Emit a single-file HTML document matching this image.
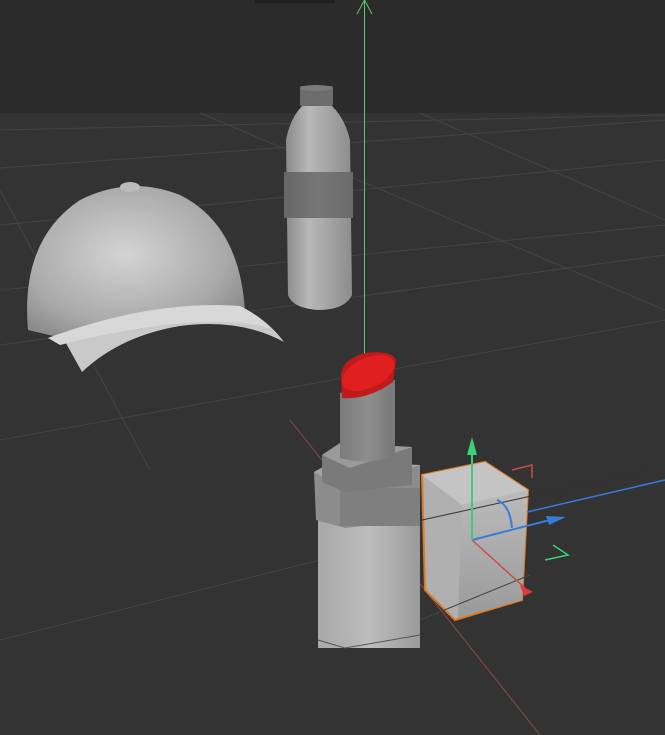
<!DOCTYPE html>
<html><head><style>html,body{margin:0;padding:0;background:#333;}svg{display:block}</style></head>
<body>
<svg width="665" height="735" viewBox="0 0 665 735" xmlns="http://www.w3.org/2000/svg">
<defs>
<radialGradient id="dome" cx="0.45" cy="0.45" r="0.65"><stop offset="0" stop-color="#d4d4d4"/><stop offset="0.7" stop-color="#aaa"/><stop offset="1" stop-color="#8a8a8a"/></radialGradient>
<linearGradient id="bot" x1="0" x2="1"><stop offset="0" stop-color="#8a8a8a"/><stop offset="0.35" stop-color="#b8b8b8"/><stop offset="1" stop-color="#8c8c8c"/></linearGradient>
<linearGradient id="band" x1="0" x2="1"><stop offset="0" stop-color="#666"/><stop offset="0.5" stop-color="#777"/><stop offset="1" stop-color="#6a6a6a"/></linearGradient>
<linearGradient id="lb" x1="0" x2="1"><stop offset="0" stop-color="#a8a8a8"/><stop offset="0.5" stop-color="#bdbdbd"/><stop offset="1" stop-color="#9a9a9a"/></linearGradient>
<linearGradient id="tube" x1="0" x2="1"><stop offset="0" stop-color="#7a7a7a"/><stop offset="0.5" stop-color="#8e8e8e"/><stop offset="1" stop-color="#777"/></linearGradient>
<linearGradient id="bf" x1="0" y1="0" x2="0" y2="1"><stop offset="0" stop-color="#bbb"/><stop offset="1" stop-color="#9a9a9a"/></linearGradient>
</defs>
<rect width="665" height="113" fill="#2b2b2b"/>
<rect y="113" width="665" height="622" fill="#333"/>
<rect x="255" y="0" width="80" height="3" fill="#1e1e1e"/>
<g stroke="#444" stroke-width="1" fill="none">
<line x1="0" y1="130" x2="665" y2="115"/>
<line x1="0" y1="168" x2="665" y2="120"/>
<line x1="0" y1="225" x2="665" y2="160"/>
<line x1="0" y1="290" x2="665" y2="225"/>
<line x1="0" y1="345" x2="665" y2="255"/>
<line x1="0" y1="440" x2="665" y2="320"/>
<line x1="200" y1="113" x2="665" y2="310"/>
<line x1="420" y1="113" x2="665" y2="220"/>
<line x1="0" y1="190" x2="150" y2="470"/>
<line x1="0" y1="640" x2="320" y2="560"/>
</g>
<!-- axis lines -->
<line x1="364.5" y1="0" x2="364.5" y2="372" stroke="#5fc46f" stroke-width="1"/>
<path d="M357 14 L364.5 0 L372 14" stroke="#5fc46f" fill="none"/>
<line x1="290" y1="420" x2="540" y2="735" stroke="#8a4a4a" stroke-width="1"/>
<!-- bottle -->
<path d="M303 105 L331 105 Q345 118 350 140 L352 295 Q345 310 318 310 Q292 308 288 295 L286 140 Q290 118 303 105 Z" fill="url(#bot)"/>
<rect x="284" y="172" width="69" height="46" fill="url(#band)"/>
<rect x="300" y="86" width="33" height="20" rx="2" fill="#6c6c6c"/>
<ellipse cx="316" cy="88" rx="16" ry="3" fill="#7a7a7a"/>
<!-- cap -->
<path d="M28 330 Q20 240 80 200 Q130 175 180 195 Q240 225 245 312 L230 320 Q150 300 62 338 Z" fill="url(#dome)"/>
<ellipse cx="130" cy="187" rx="10" ry="5" fill="#bbb"/>
<path d="M48 338 Q150 300 240 306 Q268 320 284 342 Q240 318 180 326 Q120 336 82 372 L62 336 Z" fill="#c9c9c9"/>
<path d="M48 338 Q150 300 240 306 Q260 316 270 328 Q200 310 60 345 Z" fill="#d8d8d8"/>
<!-- lipstick -->
<rect x="318" y="520" width="102" height="128" fill="url(#lb)"/>
<path d="M318 640 L345 648 L420 635" stroke="#555" fill="none"/>
<path d="M314 472 L332 462 L420 465 L420 520 L345 528 L316 520 Z" fill="#8c8c8c"/>
<path d="M314 472 L332 462 L420 465 L345 490 Z" fill="#a4a4a4"/>
<rect x="340" y="488" width="80" height="38" fill="#7f7f7f"/>
<path d="M322 455 L340 443 L412 447 L412 485 L345 492 L322 482 Z" fill="#7a7a7a"/>
<path d="M322 455 L340 443 L412 447 L350 468 Z" fill="#9a9a9a"/>
<path d="M340 393 L395 380 L395 455 Q370 466 340 458 Z" fill="url(#tube)"/>
<path d="M341 378 Q340 360 365 353 Q392 350 396 360 L393 382 Q368 400 342 398 Z" fill="#c01a1a"/>
<ellipse cx="368" cy="373" rx="28" ry="15" transform="rotate(-25 368 373)" fill="#e02020"/>
<!-- selected box -->
<path d="M422 475 L485 462 L528 490 L522 600 L455 620 L425 590 Z" fill="#b0b0b0" stroke="#e07a20" stroke-width="2"/>
<path d="M422 475 L485 462 L528 490 L462 505 Z" fill="#c4c4c4"/>
<path d="M462 505 L528 490 L522 600 L458 618 Z" fill="url(#bf)"/>
<path d="M422 520 L650 470" stroke="#333" stroke-width="1"/>
<path d="M420 620 L530 575" stroke="#444"/>
<!-- gizmo -->
<line x1="527" y1="512" x2="665" y2="480" stroke="#3a7ad8" stroke-width="1.5"/>
<line x1="472" y1="540" x2="550" y2="520" stroke="#3a7ad8" stroke-width="2"/>
<path d="M546 516 L566 517 L549 525 Z" fill="#3a7ad8"/>
<path d="M497 500 Q510 505 512 528" stroke="#3a7ad8" stroke-width="2" fill="none"/>
<line x1="472" y1="540" x2="472" y2="450" stroke="#3ad07a" stroke-width="2"/>
<path d="M467 455 L472 437 L477 455 Z" fill="#3ad07a"/>
<path d="M512 470 L532 465 L532 478" stroke="#c84a4a" stroke-width="1.5" fill="none"/>
<path d="M553 545 L568 555 L545 560" stroke="#3ad07a" stroke-width="1.5" fill="none"/>
<line x1="472" y1="540" x2="525" y2="588" stroke="#d04a4a" stroke-width="1.5"/>
<path d="M520 585 L533 592 L524 596 Z" fill="#e03a3a"/>
</svg>
</body></html>
